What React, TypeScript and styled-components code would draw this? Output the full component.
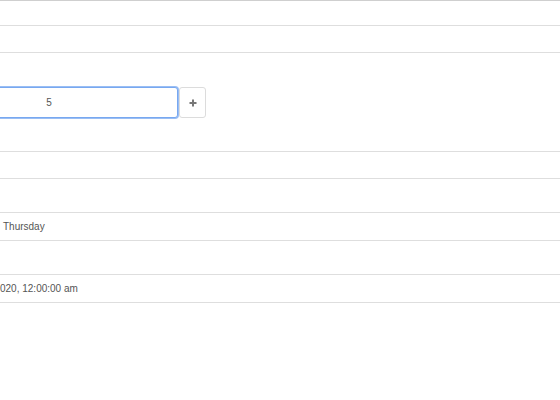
import styled, { createGlobalStyle } from 'styled-components'
import { ReactElement } from 'react'

const GlobalStyle = createGlobalStyle`
  html, body {
    margin: 0;
    padding: 0;
    background: #ffffff;
    overflow: hidden;
  }
  body {
    font-family: "Liberation Sans", Arial, sans-serif;
    font-size: 10px;
    color: #555555;
  }
`

const Table = styled.div`
  width: 560px;
  border-top: 1px solid #cfcfcf;
  display: flex;
  flex-direction: column;
`

const Row = styled.div<{ $height: number }>`
  box-sizing: border-box;
  height: ${p => p.$height}px;
  border-bottom: 1px solid #dedede;
  display: flex;
  align-items: center;
  padding-left: 3px;
`

const CellText = styled.span`
  white-space: nowrap;
  line-height: 1;
  margin-top: 1px;
`

const ClippedText = styled(CellText)`
  margin-left: -3px;
`

const InputGroup = styled.div`
  display: flex;
  align-items: stretch;
  gap: 1px;
  height: 31px;
  margin-left: -83px;
  margin-top: 1px;
`

const NumberInput = styled.input`
  box-sizing: border-box;
  width: 258px;
  height: 31px;
  border: 1px solid #78a8f0;
  box-shadow: 0 0 0 1px rgba(120, 168, 240, 0.75);
  border-radius: 3px;
  text-align: center;
  font-family: "Liberation Sans", Arial, sans-serif;
  font-size: 10px;
  color: #555555;
  outline: none;
  padding: 0;
`

const StepButton = styled.button`
  box-sizing: border-box;
  width: 27px;
  height: 31px;
  border: 1px solid #dcdcdc;
  border-radius: 3px;
  background: #ffffff;
  display: flex;
  align-items: center;
  justify-content: center;
  padding: 0;
  cursor: pointer;
`

function PlusIcon (): ReactElement {
  return (
    <svg width='8' height='8' viewBox='0 0 8 8'>
      <path d='M3 0.5h2v2.5h2.5v2h-2.5v2.5h-2v-2.5h-2.5v-2h2.5z' fill='#777777' />
    </svg>
  )
}

export default function App (): ReactElement {
  return (
    <>
      <GlobalStyle />
      <Table>
        <Row $height={25} />
        <Row $height={27} />
        <Row $height={99}>
          <InputGroup>
            <NumberInput type='text' defaultValue='5' />
            <StepButton aria-label='increase'><PlusIcon /></StepButton>
          </InputGroup>
        </Row>
        <Row $height={27} />
        <Row $height={34} />
        <Row $height={28}><CellText>Thursday</CellText></Row>
        <Row $height={34} />
        <Row $height={28}><ClippedText>020, 12:00:00 am</ClippedText></Row>
      </Table>
    </>
  )
}
